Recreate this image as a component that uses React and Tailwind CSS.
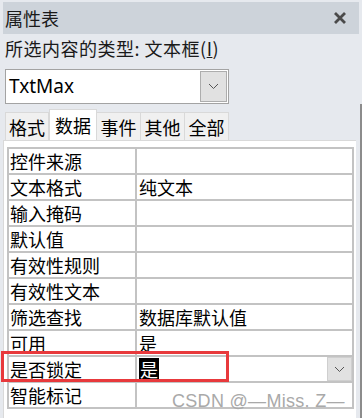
import React from 'react';

const rows = [
    { name: '控件来源', value: '' },
    { name: '文本格式', value: '纯文本' },
    { name: '输入掩码', value: '' },
    { name: '默认值', value: '' },
    { name: '有效性规则', value: '' },
    { name: '有效性文本', value: '' },
    { name: '筛选查找', value: '数据库默认值' },
    { name: '可用', value: '是' },
    { name: '是否锁定', value: '是', active: true },
    { name: '智能标记', value: '' },
];

const tabs = ['格式', '数据', '事件', '其他', '全部'];

const Chevron = () => (
    <svg width="11" height="7" viewBox="0 0 11 7" fill="none">
        <path d="M1 1l4.5 4.5L10 1" stroke="#555" strokeWidth="1" />
    </svg>
);

const App = () => {
    return (
        <div
            className="relative w-[362px] h-[418px] overflow-hidden bg-[#e6e9ee] text-black"
            style={{ fontFamily: '"Noto Sans CJK SC", "Noto Sans", sans-serif' }}
        >
            {/* title bar */}
            <div className="mt-[2px] ml-[3px] w-[356px] h-[32px] bg-[#cdd3da] flex items-center justify-between pl-[2px] pr-[12px]">
                <span className="text-[18px] leading-none text-[#1a1a1a]">属性表</span>
                <svg width="14" height="14" viewBox="0 0 14 14">
                    <path d="M2 2l10 10M12 2L2 12" stroke="#4a4a4a" strokeWidth="2.8" />
                </svg>
            </div>

            <div className="h-[28px] flex items-center pl-[5px] text-[18px] leading-none text-[#1a1a1a] tracking-[0.5px]">
                所选内容的类型:&nbsp;文本框(<span className="underline">I</span>)
            </div>

            {/* combo */}
            <div className="mt-[7px] ml-[5px] w-[224px] h-[35px] bg-white border border-[#a3a3a3] flex items-center">
                <span className="flex-1 pl-[3px] text-[19px] leading-none" style={{ fontFamily: '"Noto Sans", sans-serif' }}>TxtMax</span>
                <div className="w-[27px] h-[31px] mr-[1px] bg-[#e1e1e1] border border-[#adadad] flex items-center justify-center">
                    <Chevron />
                </div>
            </div>

            {/* tabs */}
            <div className="mt-[5px] ml-[5px] h-[31px] flex items-end">
                {tabs.map(t => (
                    t === '数据' ? (
                        <div key={t} className="h-[31px] w-[48px] bg-white border border-b-0 border-[#d9d9d9] flex items-center justify-center text-[18px] leading-none">
                            {t}
                        </div>
                    ) : (
                        <div key={t} className="h-[28px] w-[44px] bg-[#f0f0f0] border border-b-0 border-l-0 first:border-l border-[#d9d9d9] flex items-center justify-center text-[18px] leading-none">
                            {t}
                        </div>
                    )
                ))}
            </div>

            {/* property panel */}
            <div className="ml-[3px] w-[353px] h-[278px] bg-white border-l border-t border-[#d9d9d9] pt-[6px] pl-[3px]">
                <div className="w-[347px] bg-[#c3c3c3] p-[2px] grid grid-cols-[126px_215px] gap-[2px]">
                    {rows.map(r => (
                        <React.Fragment key={r.name}>
                            <div className="h-[24px] bg-white flex items-center pl-[1px] text-[18px] leading-none">
                                {r.name}
                            </div>
                            <div className="h-[24px] bg-white flex items-center pl-[2px] text-[18px] leading-none">
                                {r.active ? (
                                    <>
                                        <span className="bg-black text-white h-[22px] flex items-center px-[1px]">{r.value}</span>
                                        <span className="flex-1" />
                                        <div className="w-[25px] h-[24px] bg-[#e1e1e1] border border-[#cfcfcf] flex items-center justify-center">
                                            <Chevron />
                                        </div>
                                    </>
                                ) : r.value}
                            </div>
                        </React.Fragment>
                    ))}
                </div>
            </div>

            {/* right edge */}
            <div className="absolute top-[104px] right-0 w-[2px] h-[314px] bg-[#8c8c8c]" />

            {/* red highlight */}
            <div className="absolute left-[1px] top-[351px] w-[228px] h-[31px] border-[3px] border-[#e8393c]" />

            {/* watermark */}
            <div
                className="absolute left-[172px] top-[392px] text-[18px] leading-none text-[#a9a9a9] tracking-[0.3px]"
                style={{ fontFamily: '"Liberation Sans", sans-serif' }}
            >
                CSDN @—Miss. Z—
            </div>
        </div>
    );
};

export default App;
